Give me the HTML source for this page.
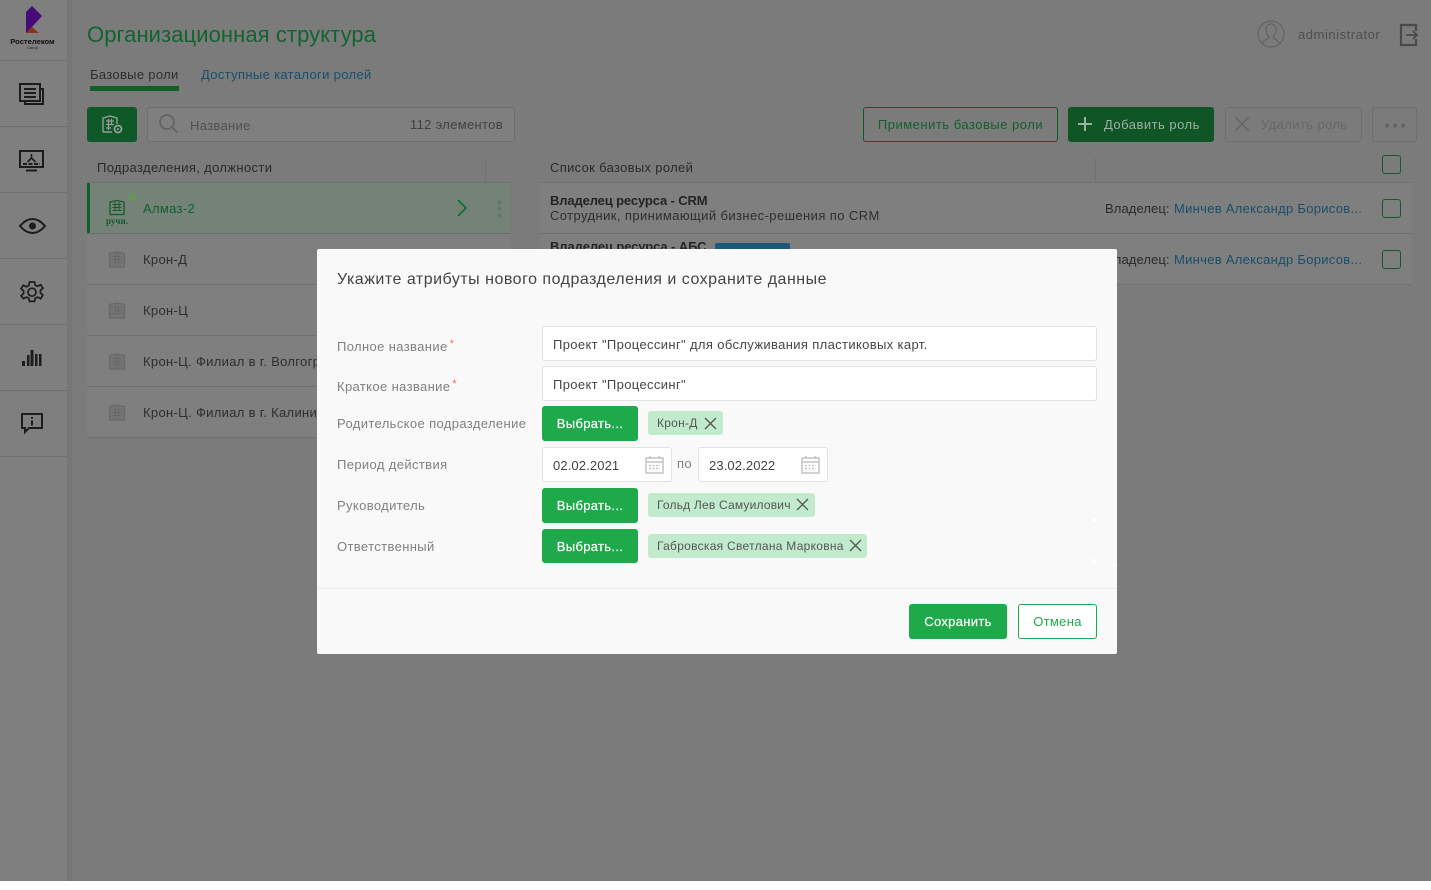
<!DOCTYPE html>
<html lang="ru"><head><meta charset="utf-8"><title>Организационная структура</title>
<style>
html,body{margin:0;padding:0;width:1431px;height:890px;background:#fff;overflow:hidden}
body{position:relative;font-family:"Liberation Sans","DejaVu Sans",sans-serif;font-size:13px;letter-spacing:.32px}
.a{position:absolute;white-space:nowrap}
.t{position:absolute;white-space:nowrap;line-height:18px}
#bg{position:absolute;left:0;top:0;width:1431px;height:881px;background:#7b7b7b;overflow:hidden}
.ln{position:absolute;background:#6e6e6e;height:1px}
.btn{position:absolute;box-sizing:border-box;border-radius:3px;text-align:center;white-space:nowrap}
.sel{background:#1eaa4a;color:#fff;width:96px;height:35px;line-height:35px;left:542px;border-radius:3px;position:absolute;text-align:center;-webkit-text-stroke:.2px #fff}
.inp{position:absolute;box-sizing:border-box;background:#fff;border:1px solid #e2e2e2;border-radius:3px;color:#444;line-height:35px;padding-left:10px;white-space:nowrap;letter-spacing:.36px}
.lab{position:absolute;left:337px;color:#808080;line-height:18px;white-space:nowrap;letter-spacing:.37px}
.chip{position:absolute;left:648px;height:24px;background:#c2ebce;border-radius:3px;color:#555;font-size:12px;line-height:24px;padding-left:9px;box-sizing:border-box;white-space:nowrap;letter-spacing:.25px}
.star{color:#f56c6c;font-size:11px;position:relative;top:-4px;margin-left:2px}
svg{position:absolute;overflow:visible}
.row{position:absolute;left:87px;width:423px;height:50px;border-bottom:1px solid #707070;background:#7f7f7f}
.cb{position:absolute;left:1382px;width:17px;height:17px;border:1.5px solid #0f5c2b;border-radius:3px}
</style></head><body>
<div id="bg">
  <!-- sidebar -->
  <div class="a" style="left:0;top:0;width:67px;height:881px;background:#7f7f7f"></div>
  <div class="a" style="left:67px;top:0;width:5px;height:881px;background:#767676"></div>
  <svg style="left:0;top:0" width="67" height="60">
    <polygon points="26,12 32,6 42,16 32,27 26,33" fill="#470b78"/>
    <polygon points="26,33 32,27 39,33" fill="#8a3616"/>
  </svg>
  <div class="a" style="left:0;width:65px;text-align:center;top:37px;font-size:7.6px;line-height:10px;color:#111;letter-spacing:0;font-weight:bold">Ростелеком</div>
  <div class="a" style="left:0;width:65px;text-align:center;top:45px;font-size:4px;line-height:5px;color:#222;letter-spacing:0">Сагор</div>
  <div class="ln" style="left:0;top:60px;width:67px"></div>
  <div class="ln" style="left:0;top:126px;width:67px"></div>
  <div class="ln" style="left:0;top:192px;width:67px"></div>
  <div class="ln" style="left:0;top:258px;width:67px"></div>
  <div class="ln" style="left:0;top:324px;width:67px"></div>
  <div class="ln" style="left:0;top:390px;width:67px"></div>
  <div class="ln" style="left:0;top:456px;width:67px"></div>
  <svg style="left:19px;top:83px" width="26" height="24" fill="none" stroke="#1c1c1c" stroke-width="2">
    <rect x="1" y="1" width="20" height="17"/><path d="M21 6h3v15H6v-3M5 6h12M5 10h12M5 14h12"/>
  </svg>
  <svg style="left:19px;top:150px" width="26" height="24" fill="none" stroke="#1c1c1c" stroke-width="2">
    <rect x="1" y="1" width="23" height="16"/><path d="M7 20.500h11"/>
    <path d="M4 14h17" stroke-dasharray="4 1.500"/><path d="M12.500 4v5M8.500 12l4-4 4 4" stroke-width="1.600"/>
  </svg>
  <svg style="left:19px;top:218px" width="27" height="16" fill="none" stroke="#1c1c1c" stroke-width="2">
    <path d="M1 8C6 2 10 1 13.500 1S21 2 26 8C21 14 17 15 13.500 15S6 14 1 8Z"/><circle cx="13.500" cy="8" r="3.500" fill="#1c1c1c" stroke="none"/>
  </svg>
  <svg style="left:20px;top:281px" width="24" height="24" fill="none" stroke="#1c1c1c" stroke-width="1.700">
    <path d="M9.500 1h5l.7 3.200 2.400 1.100 3-1.600 2.300 3.500-2.500 2.200v2.600l2.500 2.200-2.300 3.500-3-1.600-2.400 1.100-.7 3.200h-5l-.7-3.200-2.400-1.100-3 1.600L1.100 14.700l2.500-2.200V9.900L1.100 7.700l2.300-3.500 3 1.600 2.400-1.100z"/><circle cx="12" cy="11.200" r="4"/>
  </svg>
  <svg style="left:22px;top:350px" width="20" height="17" fill="#1c1c1c">
    <rect x="0" y="11" width="3" height="5"/><rect x="5" y="5" width="2.500" height="11"/><rect x="8.500" y="0" width="3" height="16"/><rect x="13" y="4" width="2.500" height="12"/><rect x="17" y="4" width="2.500" height="12"/>
  </svg>
  <svg style="left:21px;top:413px" width="22" height="22" fill="none" stroke="#1c1c1c" stroke-width="2">
    <path d="M1 1h20v14H8l-4 4v-4H1z"/><path d="M11 4v1.800M11 7.500v5"/>
  </svg>

  <!-- header -->
  <div class="t" style="left:87px;top:20px;font-size:22px;line-height:30px;color:#12642f;letter-spacing:.08px">Организационная структура</div>
  <div class="t" style="left:90px;top:66px;color:#2e2e2e">Базовые роли</div>
  <div class="a" style="left:90px;top:86px;width:89px;height:5px;background:#0f6029"></div>
  <div class="t" style="left:201px;top:66px;color:#174f6a;letter-spacing:.34px">Доступные каталоги ролей</div>
  <svg style="left:1257px;top:20px" width="28" height="28" fill="none" stroke="#636363" stroke-width="1.200">
    <circle cx="14" cy="14" r="13"/><path d="M5.500 24c1-4 4-4.500 6-5.500v-2.500c-1.500-1.500-2.500-4-2.500-7 0-3 2-5 5-5s5 2 5 5c0 3-1 5.500-2.500 7v2.500c2 1 5 1.500 6 5.500"/>
  </svg>
  <div class="t" style="left:1298px;top:26px;color:#4f4f4f;letter-spacing:.55px">administrator</div>
  <svg style="left:1399px;top:24px" width="20" height="22" fill="none" stroke="#4a4a4a" stroke-width="2.200">
    <path d="M17 7V1H2v20h15v-6"/><path d="M7 11h11M14 7l4 4-4 4" stroke-width="1.800"/>
  </svg>

  <!-- toolbar -->
  <div class="btn" style="left:87px;top:107px;width:50px;height:35px;background:#0f5828"></div>
  <svg style="left:102px;top:115px" width="22" height="20" fill="none" stroke="#93a198" stroke-width="1.400">
    <path d="M1 17V3l7-2 7 2v6M1 17h9"/><path d="M4 6h8M4 9.500h8M4 13h5M6.500 4v11M9.500 4v6" stroke-width="1.200"/><circle cx="16" cy="14" r="3.500" stroke-width="1.800"/><circle cx="16" cy="14" r="1" fill="#93a198" stroke="none"/>
  </svg>
  <div class="btn" style="left:147px;top:107px;width:368px;height:35px;border:1px solid #6e6e6e;background:#7f7f7f"></div>
  <svg style="left:159px;top:114px" width="20" height="20" fill="none" stroke="#626262" stroke-width="1.700">
    <circle cx="8" cy="8" r="7"/><path d="M13 13l5.500 5.500"/>
  </svg>
  <div class="t" style="left:190px;top:117px;color:#505050">Название</div>
  <div class="t" style="left:410px;top:116px;color:#424242">112 элементов</div>
  <div class="btn" style="left:863px;top:107px;width:195px;height:35px;border:1px solid #0f5828;color:#12602e;line-height:33px;letter-spacing:.5px">Применить базовые роли</div>
  <div class="btn" style="left:1068px;top:107px;width:146px;height:35px;background:#0f5525"></div>
  <svg style="left:1077px;top:116px" width="16" height="16" stroke="#9db0a4" stroke-width="2"><path d="M8 1v14M1 8h14"/></svg>
  <div class="t" style="left:1104px;top:116px;color:#9db0a4;letter-spacing:.48px">Добавить роль</div>
  <div class="btn" style="left:1225px;top:107px;width:137px;height:35px;border:1px solid #6e6e6e"></div>
  <svg style="left:1234px;top:116px" width="16" height="16" stroke="#666" stroke-width="1.500"><path d="M1 1l14 14M15 1L1 15"/></svg>
  <div class="t" style="left:1261px;top:116px;color:#666;letter-spacing:.4px">Удалить роль</div>
  <div class="btn" style="left:1372px;top:107px;width:45px;height:35px;border:1px solid #6e6e6e"></div>
  <svg style="left:1385px;top:123px" width="20" height="5" fill="#636363"><circle cx="2" cy="2.500" r="2"/><circle cx="10" cy="2.500" r="2"/><circle cx="18" cy="2.500" r="2"/></svg>

  <!-- left table -->
  <div class="t" style="left:97px;top:159px;color:#2a2a2a;letter-spacing:.36px">Подразделения, должности</div>
  <div class="a" style="left:485px;top:158px;width:1px;height:24px;background:#717171"></div>
  <div class="ln" style="left:87px;top:182px;width:423px;background:#717171"></div>
  <div class="row" style="top:183px;background:#748278;border-bottom:1px solid #6c6c6c"></div>
  <div class="a" style="left:87px;top:183px;width:3px;height:50px;background:#0f6029"></div>
  <svg style="left:107px;top:192px" width="34" height="34" fill="none" stroke="#0f5c2c" stroke-width="1.300">
    <circle cx="25" cy="5" r="4.500" fill="#6b9160" stroke="none"/>
    <path d="M3 22.500V10l7-1.500L17 10v12.500z"/><path d="M5.500 12.500h9M5.500 15.500h9M5.500 18.500h9M8 10v9M12 10v9" stroke-width="1"/>
  </svg>
  <div class="a" style="left:106px;top:216px;font:bold 9px/10px 'Liberation Serif',serif;color:#0f5c2c;letter-spacing:0">ручн.</div>
  <div class="t" style="left:143px;top:200px;color:#0f612f">Алмаз-2</div>
  <svg style="left:456px;top:199px" width="12" height="18" fill="none" stroke="#106d33" stroke-width="1.700"><path d="M2 1l8 8-8 8"/></svg>
  <svg style="left:497px;top:200px" width="5" height="18" fill="#657569"><circle cx="2.500" cy="2.500" r="2"/><circle cx="2.500" cy="9" r="2"/><circle cx="2.500" cy="15.500" r="2"/></svg>

  <div class="row" style="top:234px"></div>
  <div class="row" style="top:285px"></div>
  <div class="row" style="top:336px"></div>
  <div class="row" style="top:387px"></div>
  <svg style="left:108px;top:251px" width="18" height="17" fill="none" stroke="#686868" stroke-width="1.300"><path d="M1.500 16V2.500L9 1l7.500 1.500V16z" fill="#747474"/><path d="M4.500 5.500h9M4.500 8.500h9M4.500 11.500h9M7.500 3.500v9M10.500 3.500v9" stroke-width=".9"/></svg>
  <svg style="left:108px;top:302px" width="18" height="17" fill="none" stroke="#686868" stroke-width="1.300"><path d="M1.500 16V2.500L9 1l7.500 1.500V16z" fill="#747474"/><path d="M4.500 5.500h9M4.500 8.500h9M4.500 11.500h9M7.500 3.500v9M10.500 3.500v9" stroke-width=".9"/></svg>
  <svg style="left:108px;top:353px" width="18" height="17" fill="none" stroke="#686868" stroke-width="1.300"><path d="M1.500 16V2.500L9 1l7.500 1.500V16z" fill="#747474"/><path d="M4.500 5.500h9M4.500 8.500h9M4.500 11.500h9M7.500 3.500v9M10.500 3.500v9" stroke-width=".9"/></svg>
  <svg style="left:108px;top:404px" width="18" height="17" fill="none" stroke="#686868" stroke-width="1.300"><path d="M1.500 16V2.500L9 1l7.500 1.500V16z" fill="#747474"/><path d="M4.500 5.500h9M4.500 8.500h9M4.500 11.500h9M7.500 3.500v9M10.500 3.500v9" stroke-width=".9"/></svg>
  <div class="t" style="left:143px;top:251px;color:#2e2e2e">Крон-Д</div>
  <div class="t" style="left:143px;top:302px;color:#2e2e2e">Крон-Ц</div>
  <div class="t" style="left:143px;top:353px;color:#2e2e2e">Крон-Ц. Филиал в г. Волгограде</div>
  <div class="t" style="left:143px;top:404px;color:#2e2e2e">Крон-Ц. Филиал в г. Калининграде</div>

  <!-- right table -->
  <div class="t" style="left:550px;top:159px;color:#2a2a2a">Список базовых ролей</div>
  <div class="a" style="left:1095px;top:158px;width:1px;height:24px;background:#717171"></div>
  <div class="ln" style="left:540px;top:182px;width:872px;background:#717171"></div>
  <div class="row" style="left:540px;width:872px;top:183px"></div>
  <div class="row" style="left:540px;width:872px;top:234px"></div>
  <div class="t" style="left:550px;top:192px;color:#242424;font-weight:bold;letter-spacing:-.13px">Владелец ресурса - CRM</div>
  <div class="t" style="left:550px;top:207px;color:#2e2e2e;letter-spacing:.41px">Сотрудник, принимающий бизнес-решения по CRM</div>
  <div class="t" style="left:550px;top:238px;color:#242424;font-weight:bold;letter-spacing:-.1px">Владелец ресурса - АБС</div>
  <div class="a" style="left:715px;top:243px;width:75px;height:6px;background:#1a5a78;border-radius:2px 2px 0 0"></div>
  <div class="t" style="left:1105px;top:200px;color:#2a2a2a;letter-spacing:.1px">Владелец:</div>
  <div class="t" style="left:1174px;top:200px;color:#174f6a;letter-spacing:.29px">Минчев Александр Борисов...</div>
  <div class="t" style="left:1105px;top:251px;color:#2a2a2a;letter-spacing:.1px">Владелец:</div>
  <div class="t" style="left:1174px;top:251px;color:#174f6a;letter-spacing:.29px">Минчев Александр Борисов...</div>
  <div class="cb" style="top:155px"></div>
  <div class="cb" style="top:199px"></div>
  <div class="cb" style="top:250px"></div>
</div>

<!-- modal -->
<div class="a" style="left:317px;top:249px;width:800px;height:405px;background:#f9f9f9;border-radius:2px"></div>
<div class="t" style="left:337px;top:270px;font-size:16px;line-height:20px;color:#444;letter-spacing:.5px">Укажите атрибуты нового подразделения и сохраните данные</div>

<div class="lab" style="top:338px">Полное название<span class="star">*</span></div>
<div class="lab" style="top:378px">Краткое название<span class="star">*</span></div>
<div class="lab" style="top:415px">Родительское подразделение</div>
<div class="lab" style="top:456px">Период действия</div>
<div class="lab" style="top:497px">Руководитель</div>
<div class="lab" style="top:538px">Ответственный</div>

<div class="inp" style="left:542px;top:326px;width:555px;height:35px">Проект "Процессинг" для обслуживания пластиковых карт.</div>
<div class="inp" style="left:542px;top:366px;width:555px;height:35px">Проект "Процессинг"</div>
<div class="sel" style="top:406px">Выбрать...</div>
<div class="chip" style="top:411px;width:75px">Крон-Д</div>
<svg style="left:704px;top:417px" width="13" height="13" stroke="#555" stroke-width="1.300"><path d="M1 1l11 11M12 1L1 12"/></svg>

<div class="inp" style="left:542px;top:447px;width:130px;height:35px;letter-spacing:.12px">02.02.2021</div>
<div class="lab" style="left:677px;top:455px">по</div>
<div class="inp" style="left:698px;top:447px;width:130px;height:35px;letter-spacing:.12px">23.02.2022</div>
<svg style="left:645px;top:455px" width="19" height="19" fill="none" stroke="#c4c4c4" stroke-width="1.500"><rect x="1" y="3" width="17" height="15"/><path d="M1 7h17M5 1v3M14 1v3"/><path d="M4 10.500h11M4 13.500h11" stroke-dasharray="2 1.500"/></svg>
<svg style="left:801px;top:455px" width="19" height="19" fill="none" stroke="#c4c4c4" stroke-width="1.500"><rect x="1" y="3" width="17" height="15"/><path d="M1 7h17M5 1v3M14 1v3"/><path d="M4 10.500h11M4 13.500h11" stroke-dasharray="2 1.500"/></svg>

<div class="sel" style="top:488px">Выбрать...</div>
<div class="chip" style="top:493px;width:167px;letter-spacing:.2px">Гольд Лев Самуилович</div>
<svg style="left:796px;top:498px" width="13" height="13" stroke="#555" stroke-width="1.300"><path d="M1 1l11 11M12 1L1 12"/></svg>
<div class="sel" style="top:529px;height:34px;line-height:35px">Выбрать...</div>
<div class="chip" style="top:534px;width:219px;letter-spacing:.28px">Габровская Светлана Марковна</div>
<svg style="left:849px;top:539px" width="13" height="13" stroke="#555" stroke-width="1.300"><path d="M1 1l11 11M12 1L1 12"/></svg>

<div class="a" style="left:1092px;top:518px;width:4px;height:4px;background:#fff"></div>
<div class="a" style="left:1092px;top:559px;width:4px;height:4px;background:#fff"></div>
<div class="a" style="left:1113px;top:563px;width:4px;height:4px;background:#fff"></div>

<div class="a" style="left:317px;top:588px;width:800px;height:1px;background:#ececec"></div>
<div class="btn" style="left:909px;top:604px;width:98px;height:35px;background:#1eaa4a;color:#fff;line-height:35px;-webkit-text-stroke:.2px #fff">Сохранить</div>
<div class="btn" style="left:1018px;top:604px;width:79px;height:35px;background:#fff;border:1px solid #1eaa4a;color:#1eaa4a;line-height:33px">Отмена</div>
</body></html>
